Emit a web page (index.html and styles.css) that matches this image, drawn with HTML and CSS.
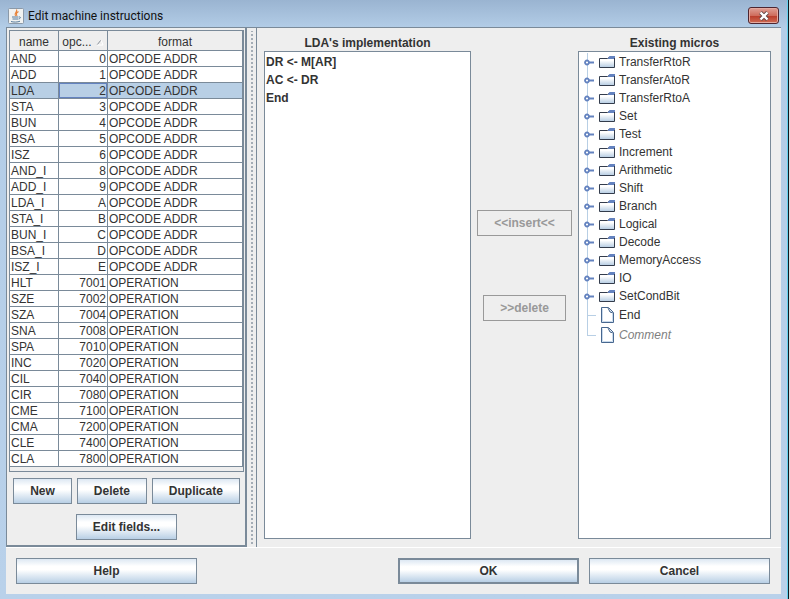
FILE: index.html
```
<!DOCTYPE html>
<html lang="en">
<head>
<meta charset="utf-8">
<title>Edit machine instructions</title>
<link rel="stylesheet" href="styles.css">
</head>
<body>
<svg class="defs" aria-hidden="true">
  <defs>
    <linearGradient id="folderFill" x1="0" y1="0" x2="0" y2="1"><stop offset="0.300" stop-color="#fff"/><stop offset="1" stop-color="#b4cbe2"/></linearGradient>
    <symbol id="handle" viewBox="0 0 10 7"><path d="M4 3.5H10" stroke="#6382bf" stroke-width="2"/><circle cx="3" cy="3.5" r="2" fill="#fff" stroke="#6382bf" stroke-width="1.8"/></symbol>
    <symbol id="folder" viewBox="0 0 16 14"><path d="M.5 3.5H8.5L10 2.500H15.5V12.5H.5Z" fill="url(#folderFill)" stroke="#333c4c"/><path d="M9 3L10.500 1H16V3Z" fill="#6382bf"/><path d="M9 3.500H15" stroke="#6382bf"/></symbol>
    <symbol id="file" viewBox="0 0 13 16"><path d="M.5 .5H7.5L12.5 5.5V15.5H.5Z" fill="#fff" stroke="#47678f"/><path d="M1.5 1.5V14.5H11.5V7" fill="none" stroke="#c9daec"/><path d="M7 1L9 5L12 6" fill="#c9daec" stroke="#47678f"/></symbol>
  </defs>
</svg>
<div class="window">
  <header class="titlebar">
    <svg class="java" viewBox="0 0 16 16" aria-hidden="true"><rect x=".5" y=".5" width="15" height="15" rx="1" fill="#f1f2f1" stroke="#8b99a8"/><path d="M8.500 1.500C10 4 5.500 5 7.500 8M10.500 3.500C8 5 8 6 9 8" fill="none" stroke="#e8833a" stroke-width="1.200"/><path d="M4 9H10.500M4.500 11H10M3 13.500C5 14.300 10 14.300 12 13.200M11 9C13 8.500 13 10.500 10.500 11" fill="none" stroke="#557a9c"/></svg>
    <h1>Edit machine instructions</h1>
    <button class="close" type="button" aria-label="Close"><svg viewBox="0 0 12 10" aria-hidden="true"><path d="M2.500 1.500L9.500 8.500M9.500 1.500L2.500 8.500" stroke="#5a4545" stroke-width="4"/><path d="M2.500 1.500L9.500 8.500M9.500 1.500L2.500 8.500" stroke="#fff" stroke-width="2.400"/></svg></button>
  </header>
  <div class="client">
    <main class="split">
      <section class="instructions">
        <div class="scroll">
          <table>
            <colgroup><col class="c-name"><col class="c-code"><col></colgroup>
            <thead><tr><th>name</th><th>opc...<svg class="sort" viewBox="0 0 8 7" aria-hidden="true"><path d="M1 6L5 1" stroke="#8a9199"/><path d="M5 1L7 6H1" fill="none" stroke="#fff"/></svg></th><th>format</th></tr></thead>
            <tbody>
              <tr><td>AND</td><td>0</td><td>OPCODE ADDR</td></tr>
              <tr><td>ADD</td><td>1</td><td>OPCODE ADDR</td></tr>
              <tr class="selected"><td>LDA</td><td class="focus">2</td><td>OPCODE ADDR</td></tr>
              <tr><td>STA</td><td>3</td><td>OPCODE ADDR</td></tr>
              <tr><td>BUN</td><td>4</td><td>OPCODE ADDR</td></tr>
              <tr><td>BSA</td><td>5</td><td>OPCODE ADDR</td></tr>
              <tr><td>ISZ</td><td>6</td><td>OPCODE ADDR</td></tr>
              <tr><td>AND_I</td><td>8</td><td>OPCODE ADDR</td></tr>
              <tr><td>ADD_I</td><td>9</td><td>OPCODE ADDR</td></tr>
              <tr><td>LDA_I</td><td>A</td><td>OPCODE ADDR</td></tr>
              <tr><td>STA_I</td><td>B</td><td>OPCODE ADDR</td></tr>
              <tr><td>BUN_I</td><td>C</td><td>OPCODE ADDR</td></tr>
              <tr><td>BSA_I</td><td>D</td><td>OPCODE ADDR</td></tr>
              <tr><td>ISZ_I</td><td>E</td><td>OPCODE ADDR</td></tr>
              <tr><td>HLT</td><td>7001</td><td>OPERATION</td></tr>
              <tr><td>SZE</td><td>7002</td><td>OPERATION</td></tr>
              <tr><td>SZA</td><td>7004</td><td>OPERATION</td></tr>
              <tr><td>SNA</td><td>7008</td><td>OPERATION</td></tr>
              <tr><td>SPA</td><td>7010</td><td>OPERATION</td></tr>
              <tr><td>INC</td><td>7020</td><td>OPERATION</td></tr>
              <tr><td>CIL</td><td>7040</td><td>OPERATION</td></tr>
              <tr><td>CIR</td><td>7080</td><td>OPERATION</td></tr>
              <tr><td>CME</td><td>7100</td><td>OPERATION</td></tr>
              <tr><td>CMA</td><td>7200</td><td>OPERATION</td></tr>
              <tr><td>CLE</td><td>7400</td><td>OPERATION</td></tr>
              <tr><td>CLA</td><td>7800</td><td>OPERATION</td></tr>
            </tbody>
          </table>
        </div>
        <div class="actions">
          <button class="btn" type="button">New</button>
          <button class="btn" type="button">Delete</button>
          <button class="btn" type="button">Duplicate</button>
          <button class="btn" type="button">Edit fields...</button>
        </div>
      </section>
      <div class="divider"></div>
      <section class="editor">
        <div class="column">
          <h2>LDA's implementation</h2>
          <ul class="box steps"><li>DR &lt;- M[AR]</li><li>AC &lt;- DR</li><li>End</li></ul>
        </div>
        <div class="transfer">
          <button class="btn" type="button" disabled>&lt;&lt;insert&lt;&lt;</button>
          <button class="btn" type="button" disabled>&gt;&gt;delete</button>
        </div>
        <div class="column">
          <h2>Existing micros</h2>
          <ul class="box tree">
            <li><svg class="handle"><use href="#handle"/></svg><svg class="folder"><use href="#folder"/></svg>TransferRtoR</li>
            <li><svg class="handle"><use href="#handle"/></svg><svg class="folder"><use href="#folder"/></svg>TransferAtoR</li>
            <li><svg class="handle"><use href="#handle"/></svg><svg class="folder"><use href="#folder"/></svg>TransferRtoA</li>
            <li><svg class="handle"><use href="#handle"/></svg><svg class="folder"><use href="#folder"/></svg>Set</li>
            <li><svg class="handle"><use href="#handle"/></svg><svg class="folder"><use href="#folder"/></svg>Test</li>
            <li><svg class="handle"><use href="#handle"/></svg><svg class="folder"><use href="#folder"/></svg>Increment</li>
            <li><svg class="handle"><use href="#handle"/></svg><svg class="folder"><use href="#folder"/></svg>Arithmetic</li>
            <li><svg class="handle"><use href="#handle"/></svg><svg class="folder"><use href="#folder"/></svg>Shift</li>
            <li><svg class="handle"><use href="#handle"/></svg><svg class="folder"><use href="#folder"/></svg>Branch</li>
            <li><svg class="handle"><use href="#handle"/></svg><svg class="folder"><use href="#folder"/></svg>Logical</li>
            <li><svg class="handle"><use href="#handle"/></svg><svg class="folder"><use href="#folder"/></svg>Decode</li>
            <li><svg class="handle"><use href="#handle"/></svg><svg class="folder"><use href="#folder"/></svg>MemoryAccess</li>
            <li><svg class="handle"><use href="#handle"/></svg><svg class="folder"><use href="#folder"/></svg>IO</li>
            <li><svg class="handle"><use href="#handle"/></svg><svg class="folder"><use href="#folder"/></svg>SetCondBit</li>
            <li class="leaf"><svg class="file"><use href="#file"/></svg>End</li>
            <li class="leaf comment"><svg class="file"><use href="#file"/></svg>Comment</li>
          </ul>
        </div>
      </section>
    </main>
    <footer class="dialog-buttons">
      <button class="btn help" type="button">Help</button>
      <button class="btn ok" type="button">OK</button>
      <button class="btn" type="button">Cancel</button>
    </footer>
  </div>
</div>
</body>
</html>
```
FILE: styles.css
```
* { box-sizing: border-box; }
body {
  margin: 0;
  padding-right: 1px;
  background: #d8dcde;
  color: #333;
  font: 12px/16px "Liberation Sans", Arial, sans-serif;
}
h1, h2, ul { margin: 0; padding: 0; font-size: inherit; }
ul { list-style: none; }
.defs { position: absolute; width: 0; height: 0; }
.window {
  display: flex;
  flex-direction: column;
  min-height: 100vh;
  padding: 0 7px 5px 6px;
  border-right: 1px solid #101820;
  box-shadow: inset -1px 0 #62d2ee;
  background: linear-gradient(#9ab4d1, #b3cde7 28px, #b9d1ea);
}
.titlebar {
  display: flex;
  align-items: center;
  height: 27px;
  padding: 4px 2px 0;
  color: #111;
}
.titlebar h1 { flex: 1; font: 12px/16px Roboto, sans-serif; }
.java { width: 16px; height: 16px; margin-right: 4px; }
.close {
  display: flex;
  align-items: center;
  justify-content: center;
  width: 31px;
  height: 17px;
  padding: 0;
  border: 1px solid #4e2630;
  border-radius: 3px;
  box-shadow: inset 0 0 0 1px #e5aaa0;
  background: linear-gradient(#dfa096, #cf6d5d 50%, #b93a29 51%, #cf6c54);
}
.close svg { width: 12px; height: 10px; }
.client {
  flex: 1;
  display: flex;
  flex-direction: column;
  background: #eee;
}
.split {
  flex: 1;
  display: grid;
  grid-template-columns: 241px 9px 1fr;
  border-top: 1px solid #7a8a99;
  border-bottom: 1px solid #fff;
}
.instructions {
  padding: 2px 1px 2px 2px;
  border: 1px solid #7a8a99;
  border-width: 0 2px 2px 1px;
}
.scroll {
  padding: 0 0 4px;
  border: 1px solid #7a8a99;
  background: #eee;
}
table {
  width: 100%;
  border-collapse: separate;
  border-spacing: 0;
  table-layout: fixed;
  background: #fff;
}
.c-name, .c-code { width: 49px; }
th, td {
  height: 16px;
  padding: 1px 1px 0;
  border: 0 solid #7a8a99;
  border-width: 0 1px 1px 0;
  line-height: 14px;
  text-align: left;
  white-space: nowrap;
}
th { height: 20px; padding: 2px 0 0; font-weight: normal; text-align: center; background: #eee; }
td:nth-child(2) { text-align: right; }
.sort { width: 8px; height: 7px; margin-left: 4px; }
.selected { background: #b8cfe5; }
.focus { box-shadow: inset 0 0 0 1px #6382bf; }
.btn {
  height: 26px;
  padding: 0 16px;
  border: 1px solid #7a8a99;
  background: linear-gradient(#dde8f3, #fff 30%, #fff 45%, #b8cfe5);
  color: #333;
  font: bold 12px/16px "Liberation Sans", Arial, sans-serif;
}
.btn:disabled { border-color: #999; background: #eee; color: #999; }
.actions {
  display: flex;
  flex-wrap: wrap;
  justify-content: center;
  gap: 10px 5px;
  padding-top: 6px;
}
.divider {
  background: radial-gradient(circle at 1px 1px, #a4adb6 1px, transparent 1px) 0 3px / 4px 4px content-box no-repeat;
  background-repeat: repeat;
  padding: 3px 1px 3px 4px;
}
.editor {
  display: grid;
  grid-template-columns: 207fr 95px 193fr;
  gap: 6px;
  padding: 8px 10px 8px 7px;
  border-left: 1px solid #7a8a99;
}
.column { display: flex; flex-direction: column; }
.column h2 { text-align: center; line-height: 15px; }
.box { flex: 1; padding-top: 1px; border: 1px solid #7a8a99; background: #fff; }
.steps { padding-left: 1px; font-weight: bold; line-height: 18px; }
.transfer {
  display: flex;
  flex-direction: column;
  align-items: center;
  justify-content: center;
  gap: 59px;
  padding-bottom: 44px;
}
.tree { padding-left: 5px; }
.tree li {
  display: flex;
  align-items: center;
  height: 18px;
  background: linear-gradient(#b8cfe5, #b8cfe5) 3px 0 / 1px 100% no-repeat;
}
.tree .leaf {
  height: 20px;
  padding-left: 17px;
  background: linear-gradient(#b8cfe5, #b8cfe5) 3px 0 / 1px 100% no-repeat, linear-gradient(#b8cfe5, #b8cfe5) 3px 10px / 9px 1px no-repeat;
}
.tree .leaf:last-child {
  background-size: 1px 10px, 9px 1px;
}
.handle { width: 10px; height: 7px; margin-right: 5px; }
.folder { width: 16px; height: 14px; margin-right: 4px; }
.file { width: 13px; height: 16px; margin-right: 5px; }
.comment { color: #808080; font-style: italic; }
.dialog-buttons {
  display: grid;
  grid-template-columns: repeat(4, 1fr);
  gap: 10px;
  padding: 10px 11px 10px 10px;
}
.ok { grid-column: 3; border-width: 2px; }
```
